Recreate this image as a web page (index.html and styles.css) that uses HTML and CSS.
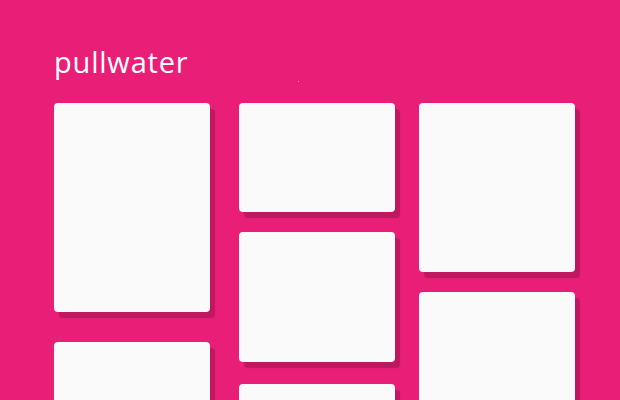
FILE: index.html
```html
<!DOCTYPE html>
<html>
<head>
<meta charset="utf-8">
<link rel="stylesheet" href="styles.css">
</head>
<body>
<div class="page">
  <h1 class="title">pullwater</h1>
  <span class="dot"></span>
  <div class="grid">
    <div class="col col1">
      <div class="card h209"></div>
      <div class="card h120 gap30"></div>
    </div>
    <div class="col col2">
      <div class="card h109"></div>
      <div class="card h130"></div>
      <div class="card h60 gap22"></div>
    </div>
    <div class="col col3">
      <div class="card h169"></div>
      <div class="card h140"></div>
    </div>
  </div>
</div>
</body>
</html>
```
FILE: styles.css
```css
html, body {
  margin: 0;
  padding: 0;
  width: 620px;
  height: 400px;
  overflow: hidden;
  background: #E91E76;
}
.page {
  position: relative;
  padding: 42px 0 0 54px;
}
.title {
  margin: 0;
  font-family: "Open Sans", "Noto Sans", sans-serif;
  font-weight: 400;
  font-size: 29px;
  letter-spacing: 0.8px;
  line-height: 40px;
  color: #ffffff;
  height: 61px;
}
.dot {
  position: absolute;
  left: 298px;
  top: 81px;
  width: 1px;
  height: 1px;
  background: #f58ab8;
}
.grid {
  display: flex;
  align-items: flex-start;
}
.col {
  width: 156px;
  display: flex;
  flex-direction: column;
  gap: 20px;
}
.col2 { margin-left: 29px; }
.col3 { margin-left: 24px; }
.card {
  background: #FAFAFA;
  border-radius: 4px;
  box-shadow: 5px 6px 1px #BF1860;
}
.gap30 { margin-top: 10px; }
.gap22 { margin-top: 2px; }
.h209 { height: 209px; }
.h120 { height: 120px; }
.h109 { height: 109px; }
.h130 { height: 130px; }
.h60 { height: 60px; }
.h169 { height: 169px; }
.h140 { height: 140px; }
```
